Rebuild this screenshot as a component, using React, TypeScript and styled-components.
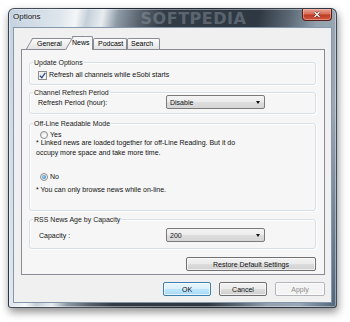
import React, { useState } from 'react';
import styled, { createGlobalStyle } from 'styled-components';

const GlobalStyle = createGlobalStyle`
  html, body {
    margin: 0;
    background: #ffffff;
  }
  body {
    font-family: "Liberation Sans", Arial, sans-serif;
  }
`;

const Page = styled.div`
  width: 350px;
  height: 322px;
  box-sizing: border-box;
  padding: 8px 0 0 8px;
  background: #fff;
`;

const Frame = styled.div`
  width: 329px;
  height: 300px;
  box-sizing: border-box;
  display: flex;
  flex-direction: column;
  padding: 0 4px 4px 4px;
  border: 1px solid rgba(30, 40, 52, 0.8);
  border-radius: 6px 6px 3px 3px;
  background: linear-gradient(
    100deg,
    #c3d2e0 0%,
    #dfe6ed 14%,
    #f4f6f8 18%,
    #c5cfd9 21%,
    #e9edf1 25%,
    #8e9aa6 29%,
    #56616c 35%,
    #323c46 41%,
    #2e3842 66%,
    #5a6773 74%,
    #94a2b0 82%,
    #9aa8b6 90%,
    #4e6379 100%
  );
  box-shadow: 1px 4px 8px rgba(0, 0, 0, 0.45), inset 0 0 0 1px rgba(255, 255, 255, 0.4);
`;

const TitleBar = styled.div`
  height: 18px;
  display: flex;
  align-items: flex-start;
  overflow: hidden;
`;

const Title = styled.div`
  padding: 3px 0 0 0;
  font-size: 8px;
  line-height: 10px;
  color: #111;
  text-shadow: 0 0 4px rgba(255, 255, 255, 0.95);
`;

const Watermark = styled.div`
  margin-left: 100px;
  padding-top: 1px;
  font-family: "DejaVu Sans", sans-serif;
  font-weight: bold;
  font-size: 16px;
  line-height: 17px;
  letter-spacing: 0.5px;
  color: rgba(160, 172, 184, 0.4);
  white-space: nowrap;
`;

const CloseButton = styled.div`
  margin-left: auto;
  width: 30px;
  height: 12px;
  box-sizing: border-box;
  border: 1px solid #5a1f16;
  border-top: none;
  border-radius: 0 0 4px 4px;
  background: linear-gradient(#e9a596 0%, #d66d57 45%, #bd3b24 55%, #cf5a40 100%);
  box-shadow: inset 0 0 0 1px rgba(255, 200, 190, 0.45);
  display: flex;
  align-items: center;
  justify-content: center;
`;

const Client = styled.div`
  height: 276px;
  box-sizing: border-box;
  display: flex;
  flex-direction: column;
  padding: 8px 6px 0 7px;
  background: #f0f0f0;
  border: 1px solid #8598ab;
`;

const TabRow = styled.div`
  height: 13px;
  display: flex;
  align-items: flex-end;
  padding-left: 12px;
  position: relative;
  z-index: 2;
`;

const Tab = styled.div<{ $active?: boolean; $slant?: boolean; $w: number; $pl: number }>`
  position: relative;
  z-index: ${p => (p.$active ? 3 : 1)};
  width: ${p => p.$w}px;
  height: ${p => (p.$active ? 14 : 11)}px;
  margin-bottom: ${p => (p.$active ? -1 : 0)}px;
  box-sizing: border-box;
  padding-left: ${p => p.$pl}px;
  border: 1px solid #898c95;
  border-bottom: none;
  border-left: ${p => (p.$slant ? 'none' : '1px solid #898c95')};
  border-radius: ${p => (p.$slant ? '0 2px 0 0' : '2px 2px 0 0')};
  background: ${p => (p.$active ? '#f6f6f6' : 'linear-gradient(#fbfbfb, #e4e4e4)')};
  font-size: 7px;
  line-height: ${p => (p.$active ? 11 : 9)}px;
  color: #000;
  white-space: nowrap;

  &::before {
    content: ${p => (p.$slant ? "''" : 'none')};
    position: absolute;
    left: -7px;
    top: -1px;
    bottom: 0;
    width: 12px;
    background: ${p => (p.$active ? '#f6f6f6' : 'linear-gradient(#fbfbfb, #e4e4e4)')};
    border-left: 1px solid #898c95;
    border-top: 1px solid #898c95;
    transform: skewX(-30deg);
    transform-origin: bottom left;
    z-index: -1;
  }
`;

const Panel = styled.div`
  position: relative;
  z-index: 1;
  height: 226px;
  box-sizing: border-box;
  display: flex;
  flex-direction: column;
  padding: 12px 8px 0 7px;
  border: 1px solid #898c95;
  background: #f6f6f6;
`;

const Group = styled.div<{ $h: number; $mt: number }>`
  height: ${p => p.$h}px;
  margin-top: ${p => p.$mt}px;
  box-sizing: border-box;
  display: flex;
  flex-direction: column;
  border: 1px solid #d7dfe6;
  border-radius: 3px;
  box-shadow: inset 1px 1px 0 #ffffff, 1px 1px 0 #ffffff;
`;

const Legend = styled.div`
  width: fit-content;
  margin: -5px 0 0 3px;
  padding: 0 1px;
  background: #f6f6f6;
  font-size: 7px;
  line-height: 9px;
  color: #222;
  white-space: nowrap;
`;

const CheckRow = styled.label`
  height: 10px;
  margin-top: 3px;
  padding-left: 8px;
  display: flex;
  align-items: center;
  gap: 2px;
  font-size: 7px;
  line-height: 10px;
  color: #111;
`;

const CheckBox = styled.span`
  width: 9px;
  height: 9px;
  box-sizing: border-box;
  border: 1px solid #8f8f8f;
  background: linear-gradient(135deg, #e2e2e2, #ffffff);
  box-shadow: inset 0 0 0 1px #f4f4f4;
  display: flex;
  align-items: center;
  justify-content: center;
`;

const FieldRow = styled.div<{ $mt: number; $pl: number }>`
  height: 14px;
  margin-top: ${p => p.$mt}px;
  padding-left: ${p => p.$pl}px;
  display: flex;
  align-items: center;
`;

const FieldLabel = styled.div<{ $w: number }>`
  width: ${p => p.$w}px;
  font-size: 7px;
  line-height: 9px;
  color: #111;
`;

const Select = styled.div`
  width: 99px;
  height: 14px;
  box-sizing: border-box;
  padding: 0 4px 0 3px;
  display: flex;
  align-items: center;
  justify-content: space-between;
  border: 1px solid #7a7a7a;
  border-radius: 2px;
  background: linear-gradient(#f4f4f4 0%, #ececec 50%, #dedede 51%, #d6d6d6 100%);
  font-size: 7px;
  color: #111;
`;

const Arrow = styled.span`
  width: 0;
  height: 0;
  border-left: 2.5px solid transparent;
  border-right: 2.5px solid transparent;
  border-top: 3px solid #111;
`;

const RadioRow = styled.label<{ $mt: number }>`
  height: 9px;
  margin-top: ${p => p.$mt}px;
  padding-left: 10px;
  display: flex;
  align-items: center;
  gap: 2px;
  font-size: 7px;
  line-height: 9px;
  color: #111;
`;

const Radio = styled.span<{ $on?: boolean }>`
  width: 8px;
  height: 8px;
  box-sizing: border-box;
  border-radius: 50%;
  border: 1px solid #8e8f8f;
  background: radial-gradient(circle at 60% 60%, #ffffff, #dcdcdc);
  display: flex;
  align-items: center;
  justify-content: center;

  &::after {
    content: '';
    display: ${p => (p.$on ? 'block' : 'none')};
    width: 4px;
    height: 4px;
    border-radius: 50%;
    background: radial-gradient(circle at 40% 40%, #9bd6f8, #1f6db0);
  }
`;

const Note = styled.div<{ $mt: number }>`
  margin-top: ${p => p.$mt}px;
  padding-left: 6px;
  font-size: 7px;
  line-height: 9.5px;
  color: #111;
`;

const Button = styled.div<{ $w: number; $kind?: 'default' | 'disabled' }>`
  width: ${p => p.$w}px;
  height: 14px;
  box-sizing: border-box;
  display: flex;
  align-items: center;
  justify-content: center;
  border-radius: 2px;
  font-size: 7px;
  border: 1px solid
    ${p => (p.$kind === 'default' ? '#3c7fb1' : p.$kind === 'disabled' ? '#b2b6ba' : '#707070')};
  color: ${p => (p.$kind === 'disabled' ? '#8d8d8d' : '#111')};
  background: ${p =>
    p.$kind === 'default'
      ? 'linear-gradient(#eaf6fd 0%, #d9f0fc 50%, #bee6fd 51%, #a7d9f5 100%)'
      : p.$kind === 'disabled'
      ? '#f4f4f4'
      : 'linear-gradient(#f2f2f2 0%, #ebebeb 50%, #dddddd 51%, #cfcfcf 100%)'};
  box-shadow: inset 0 0 0 1px rgba(255, 255, 255, 0.7);
`;

const RestoreButton = styled(Button)`
  margin-top: 8px;
  align-self: flex-end;
`;

const ButtonRow = styled.div`
  margin-top: 7px;
  display: flex;
  justify-content: flex-end;
  gap: 8px;
`;

const tabs = [
  { name: 'General', w: 39, pl: 4, slant: true },
  { name: 'News', w: 21, pl: 0, slant: true },
  { name: 'Podcast', w: 34, pl: 4, slant: false },
  { name: 'Search', w: 33, pl: 3, slant: false },
];

const App = () => {
  const [tab] = useState('News');
  const [offline, setOffline] = useState(false);

  return (
    <Page>
      <GlobalStyle />
      <Frame>
        <TitleBar>
          <Title>Options</Title>
          <Watermark>SOFTPEDIA</Watermark>
          <CloseButton>
            <svg width="8" height="7" viewBox="0 0 8 7">
              <path d="M1.5 1 L6.5 6 M6.5 1 L1.5 6" stroke="#4a1a12" strokeWidth="2.4" />
              <path d="M1.5 1 L6.5 6 M6.5 1 L1.5 6" stroke="#ffffff" strokeWidth="1.3" />
            </svg>
          </CloseButton>
        </TitleBar>
        <Client>
          <TabRow>
            {tabs.map(t => (
              <Tab key={t.name} $active={t.name === tab} $slant={t.slant} $w={t.w} $pl={t.pl}>
                {t.name}
              </Tab>
            ))}
          </TabRow>
          <Panel>
            <Group $h={23} $mt={0}>
              <Legend>Update Options</Legend>
              <CheckRow>
                <CheckBox>
                  <svg width="7" height="7" viewBox="0 0 7 7">
                    <path d="M0.8 3.6 L2.8 5.8 L6.3 0.8" fill="none" stroke="#2c4a8c" strokeWidth="1.3" />
                  </svg>
                </CheckBox>
                Refresh all channels while eSobi starts
              </CheckRow>
            </Group>

            <Group $h={22} $mt={7}>
              <Legend>Channel Refresh Period</Legend>
              <FieldRow $mt={-2} $pl={8}>
                <FieldLabel $w={128}>Refresh Period (hour):</FieldLabel>
                <Select>
                  Disable
                  <Arrow />
                </Select>
              </FieldRow>
            </Group>

            <Group $h={88} $mt={9}>
              <Legend>Off-Line Readable Mode</Legend>
              <RadioRow $mt={2} onClick={() => setOffline(true)}>
                <Radio $on={offline} />
                Yes
              </RadioRow>
              <Note $mt={-1}>
                * Linked news are loaded together for off-Line Reading. But it do
                <br />
                occupy more space and take more time.
              </Note>
              <RadioRow $mt={15} onClick={() => setOffline(false)}>
                <Radio $on={!offline} />
                No
              </RadioRow>
              <Note $mt={4}>* You can only browse news while on-line.</Note>
            </Group>

            <Group $h={30} $mt={8}>
              <Legend>RSS News Age by Capacity</Legend>
              <FieldRow $mt={4} $pl={9}>
                <FieldLabel $w={127}>Capacity :</FieldLabel>
                <Select>
                  200
                  <Arrow />
                </Select>
              </FieldRow>
            </Group>

            <RestoreButton $w={130}>Restore Default Settings</RestoreButton>
          </Panel>
          <ButtonRow>
            <Button $w={48} $kind="default">OK</Button>
            <Button $w={48}>Cancel</Button>
            <Button $w={50} $kind="disabled">Apply</Button>
          </ButtonRow>
        </Client>
      </Frame>
    </Page>
  );
};

export default App;
